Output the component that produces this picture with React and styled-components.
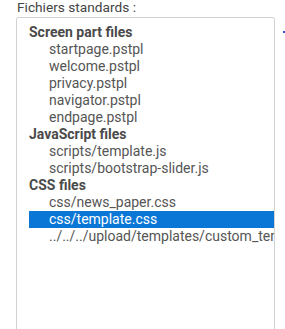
import React from 'react'
import styled, { createGlobalStyle } from 'styled-components'

const groups = [
  { label: 'Screen part files', files: ['startpage.pstpl', 'welcome.pstpl', 'privacy.pstpl', 'navigator.pstpl', 'endpage.pstpl'] },
  { label: 'JavaScript files', files: ['scripts/template.js', 'scripts/bootstrap-slider.js'] },
  { label: 'CSS files', files: ['css/news_paper.css', 'css/template.css', '../../../upload/templates/custom_template/css/custom.css'] },
]

const App = () => {
  const selected = 'css/template.css'
  return (
    <>
      <GlobalStyle />
      <Wrapper>
        <Label>Fichiers standards :</Label>
        <Row>
          <FileList role="listbox">
            {groups.map(g => (
              <Group key={g.label}>
                <GroupLabel>{g.label}</GroupLabel>
                {g.files.map(f => (
                  <Option key={f} $selected={f === selected}>{f}</Option>
                ))}
              </Group>
            ))}
          </FileList>
          <Side>
            <Dot />
          </Side>
        </Row>
      </Wrapper>
    </>
  )
}

const GlobalStyle = createGlobalStyle`
  body {
    margin: 0;
    background: #fff;
    font-family: Roboto, 'Liberation Sans', sans-serif;
    overflow: hidden;
  }
`

const Wrapper = styled.div`
  padding: 0 0 0 16px;
  display: flex;
  flex-direction: column;
`

const Label = styled.div`
  font-size: 13.7px;
  line-height: 15px;
  height: 17px;
  color: #444;
  padding-left: 1px;
`

const Row = styled.div`
  display: flex;
`

const FileList = styled.div`
  width: 259px;
  height: 320px;
  border: 1px solid #d2d2d2;
  border-radius: 2px;
  padding: 6px 0 0 12px;
  box-sizing: border-box;
  overflow: hidden;
  font-size: 14px;
  color: #555;
`

const Group = styled.div`
  display: flex;
  flex-direction: column;
`

const GroupLabel = styled.div`
  height: 17px;
  line-height: 17px;
  font-weight: bold;
  color: #4a4a4a;
  white-space: nowrap;
`

const Option = styled.div`
  height: 17px;
  line-height: 17px;
  padding-left: 20px;
  white-space: nowrap;
  overflow: hidden;
  background: ${p => (p.$selected ? '#0a77d6' : 'transparent')};
  color: ${p => (p.$selected ? '#fff' : '#555')};
`

const Side = styled.div`
  display: flex;
  padding: 14px 0 0 8px;
`

const Dot = styled.span`
  width: 2px;
  height: 2px;
  background: #3050d0;
`

export default App
